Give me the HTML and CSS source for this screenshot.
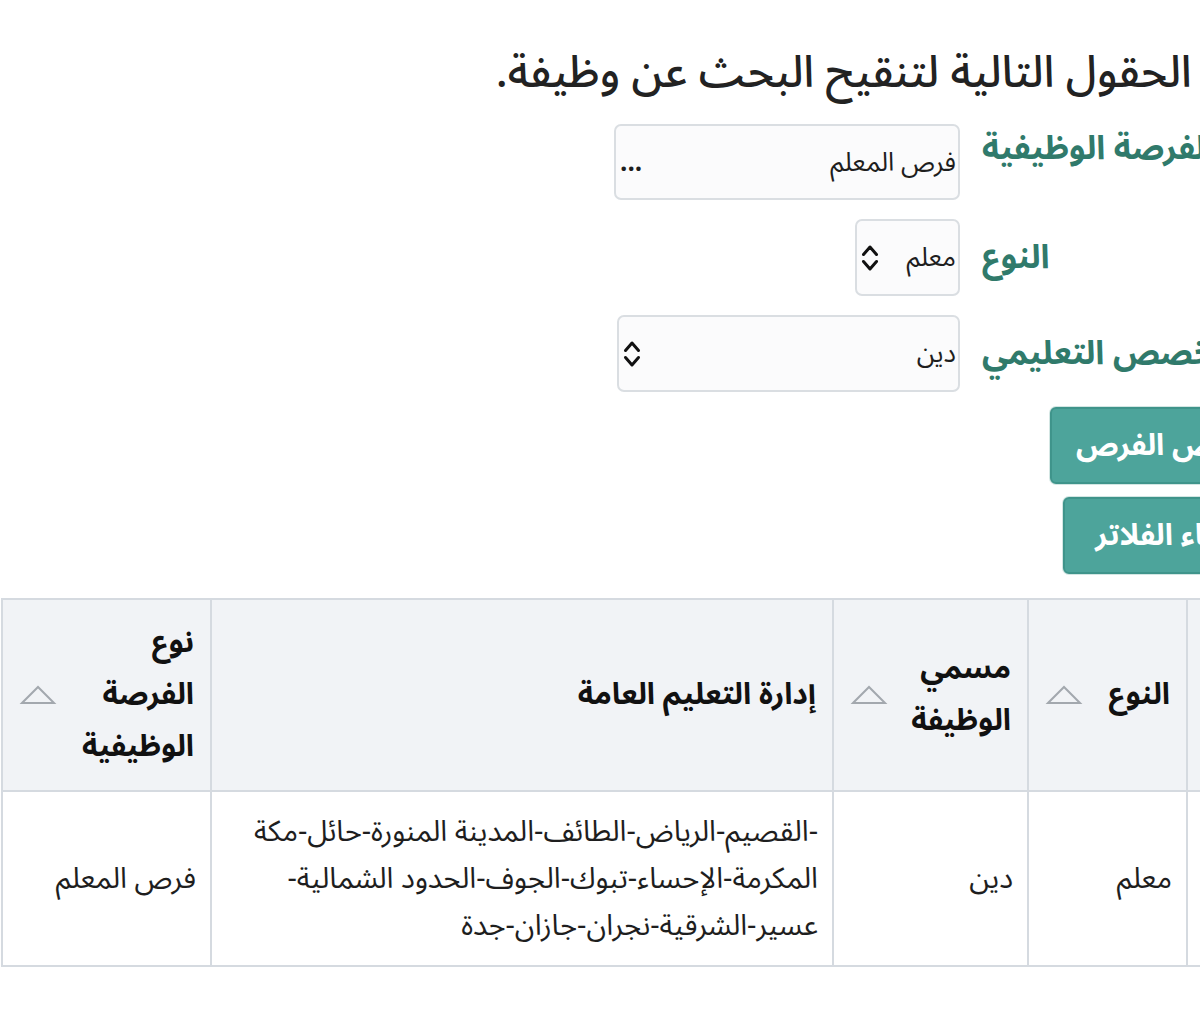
FILE: index.html
```html
<!DOCTYPE html>
<html lang="ar">
<head>
<meta charset="utf-8">
<title>البحث عن وظيفة</title>
<link rel="stylesheet" href="styles.css">
</head>
<body>
<div class="viewport">
  <div class="page" dir="rtl">
    <h2 class="intro">استخدم الحقول التالية لتنقيح البحث عن وظيفة.</h2>
    <form class="filters">
      <div class="row row-lookup">
        <label class="label">نوع الفرصة الوظيفية</label>
        <div class="control lookup">
          <span class="value">فرص المعلم</span>
          <span class="dots">...</span>
        </div>
      </div>
      <div class="row">
        <label class="label">النوع</label>
        <div class="control select narrow">
          <span class="value">معلم</span>
          <svg class="chev" viewBox="0 0 18 30" width="18" height="30"><path d="M2.5 11.5 L9 4 L15.5 11.5 M2.5 18.5 L9 26 L15.5 18.5" fill="none" stroke="#111" stroke-width="3" stroke-linecap="round" stroke-linejoin="round"/></svg>
        </div>
      </div>
      <div class="row">
        <label class="label">التخصص التعليمي</label>
        <div class="control select wide">
          <span class="value">دين</span>
          <svg class="chev" viewBox="0 0 18 30" width="18" height="30"><path d="M2.5 11.5 L9 4 L15.5 11.5 M2.5 18.5 L9 26 L15.5 18.5" fill="none" stroke="#111" stroke-width="3" stroke-linecap="round" stroke-linejoin="round"/></svg>
        </div>
      </div>
      <div class="actions">
        <button type="button" class="btn btn-show">عرض الفرص</button>
        <button type="button" class="btn btn-clear">إلغاء الفلاتر</button>
      </div>
    </form>
    <table class="grid">
      <colgroup>
        <col class="c-num">
        <col class="c-type">
        <col class="c-title">
        <col class="c-dept">
        <col class="c-opp">
      </colgroup>
      <thead>
        <tr>
          <th><div class="th-in"><span>الرقم</span></div></th>
          <th><div class="th-in"><span>النوع</span><svg class="sort" viewBox="0 0 38 22" width="38" height="22"><path d="M3 19 L19 3 L35 19 Z" fill="none" stroke="#a3a8ae" stroke-width="2"/></svg></div></th>
          <th><div class="th-in"><span>مسمي الوظيفة</span><svg class="sort" viewBox="0 0 38 22" width="38" height="22"><path d="M3 19 L19 3 L35 19 Z" fill="none" stroke="#a3a8ae" stroke-width="2"/></svg></div></th>
          <th><div class="th-in"><span>إدارة التعليم العامة</span></div></th>
          <th><div class="th-in"><span>نوع الفرصة الوظيفية</span><svg class="sort" viewBox="0 0 38 22" width="38" height="22"><path d="M3 19 L19 3 L35 19 Z" fill="none" stroke="#a3a8ae" stroke-width="2"/></svg></div></th>
        </tr>
      </thead>
      <tbody>
        <tr>
          <td>1</td>
          <td>معلم</td>
          <td>دين</td>
          <td>-القصيم-الرياض-الطائف-المدينة المنورة-حائل-مكة المكرمة-الإحساء-تبوك-الجوف-الحدود الشمالية-عسير-الشرقية-نجران-جازان-جدة</td>
          <td>فرص المعلم</td>
        </tr>
      </tbody>
    </table>
  </div>
</div>
</body>
</html>
```
FILE: styles.css
```css
html, body {
  margin: 0;
  padding: 0;
  background: #ffffff;
}
body {
  font-family: "Noto Sans Arabic", "Noto Naskh Arabic", "DejaVu Sans", sans-serif;
  color: #1e1e1e;
}
.viewport {
  width: 1200px;
  height: 1012px;
  overflow: hidden;
}
.page {
  width: 1400px;
  padding-top: 36px;
}
.intro {
  margin: 0 58px 0 0;
  font-size: 44px;
  font-weight: 500;
  line-height: 74px;
  color: #222;
}
.filters {
  margin: 14px 130px 0 0;
  display: flex;
  flex-direction: column;
  gap: 19px;
}
.row {
  display: flex;
  align-items: center;
  gap: 22px;
}
.label {
  width: 288px;
  text-align: left;
  font-size: 33px;
  line-height: 50px;
  font-weight: 700;
  color: #307a6b;
}
.row-lookup .label {
  align-self: flex-start;
}
.control {
  height: 72px;
  box-sizing: border-box;
  border: 2px solid #dadee2;
  border-radius: 7px;
  background: #fbfbfc;
  display: flex;
  align-items: center;
  justify-content: space-between;
  padding: 0 2px 0 4px;
  font-size: 26px;
}
.lookup { width: 346px; height: 76px; }
.narrow { width: 105px; height: 77px; }
.wide { width: 343px; height: 77px; }
.dots { font-size: 26px; font-weight: 700; padding-left: 0; }
.chev { flex: none; }
.actions {
  display: flex;
  flex-direction: column;
  align-items: flex-start;
  gap: 13px;
  margin-top: -4px;
}
.btn {
  font-family: inherit;
  font-size: 30px;
  font-weight: 700;
  color: #fff;
  background: #4da49b;
  border: 2px solid #3f948b;
  border-radius: 6px;
  height: 77px;
  padding: 0 24px;
  box-shadow: 0 0 0 1px #d3e6e3;
}
.btn-clear {
  padding: 0 30px 0 30px;
}
.grid {
  margin: 24px auto 0 1px;
  width: 1345px;
  border-collapse: collapse;
  table-layout: fixed;
}
.c-num { width: 158px; }
.c-type { width: 159px; }
.c-title { width: 195px; }
.c-dept { width: 622px; }
.c-opp { width: 209px; }
.grid th, .grid td {
  border: 2px solid #d5dae0;
  text-align: right;
  vertical-align: middle;
}
.grid th {
  background: #f1f3f6;
  font-size: 30px;
  font-weight: 700;
  line-height: 52px;
  padding: 17px 16px;
  color: #111;
}
.th-in {
  display: flex;
  align-items: center;
  gap: 14px;
}
.th-in span { flex: 1; }
.sort { flex: none; }
.grid td {
  font-size: 29px;
  line-height: 47px;
  padding: 16px 14px 16px 16px;
  background: #fff;
}
```
